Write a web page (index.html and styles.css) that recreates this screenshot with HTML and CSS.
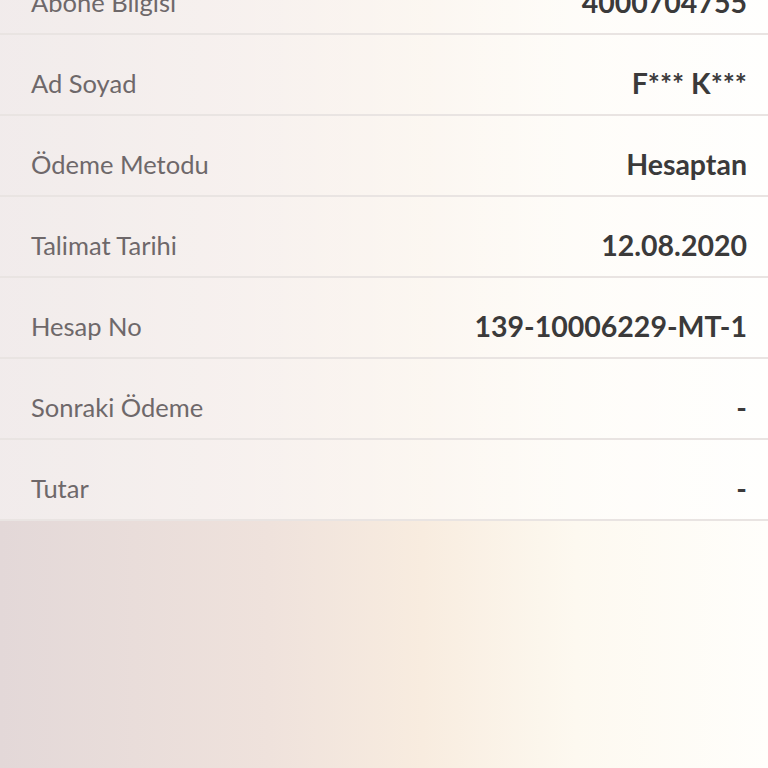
FILE: index.html
```html
<!DOCTYPE html>
<html lang="tr">
  <head>
    <meta charset="UTF-8" />
    <meta name="viewport" content="width=device-width, initial-scale=1.0" />
    <title>Talimat Detayı</title>
    <link rel="stylesheet" href="styles.css">
  </head>
  <body>
    <div class="page">
      <ul class="detail-list">
        <li class="detail-row">
          <span class="label">Abone Bilgisi</span>
          <span class="value">4000704755</span>
        </li>
        <li class="detail-row">
          <span class="label">Ad Soyad</span>
          <span class="value">F*** K***</span>
        </li>
        <li class="detail-row">
          <span class="label">Ödeme Metodu</span>
          <span class="value">Hesaptan</span>
        </li>
        <li class="detail-row">
          <span class="label">Talimat Tarihi</span>
          <span class="value">12.08.2020</span>
        </li>
        <li class="detail-row">
          <span class="label">Hesap No</span>
          <span class="value">139-10006229-MT-1</span>
        </li>
        <li class="detail-row">
          <span class="label">Sonraki Ödeme</span>
          <span class="value">-</span>
        </li>
        <li class="detail-row">
          <span class="label">Tutar</span>
          <span class="value">-</span>
        </li>
      </ul>
    </div>
  </body>
</html>
```

FILE: styles.css
```css
* {
  margin: 0;
  padding: 0;
  box-sizing: border-box;
}

html,
body {
  height: 100%;
}

body {
  font-family: "Lato", "Noto Sans", sans-serif;
  background: linear-gradient(90deg, #e3d8d8 0%, #efe2dc 35%, #f8ecdf 55%, #fdf9f0 75%, #fffefb 100%);
  overflow: hidden;
}

.page {
  height: 100%;
}

.detail-list {
  list-style: none;
  margin-top: -46px;
  background: linear-gradient(90deg, rgba(255, 255, 255, 0.5), rgba(255, 255, 255, 0.6));
}

.detail-row {
  display: flex;
  justify-content: space-between;
  align-items: center;
  height: 81px;
  padding: 16px 21px 0 31px;
  border-bottom: 2px solid #e9e4e2;
}

.label {
  font-size: 25.5px;
  color: #6e686a;
}

.value {
  font-size: 28.5px;
  font-weight: 700;
  color: #3b3a3a;
}
```
